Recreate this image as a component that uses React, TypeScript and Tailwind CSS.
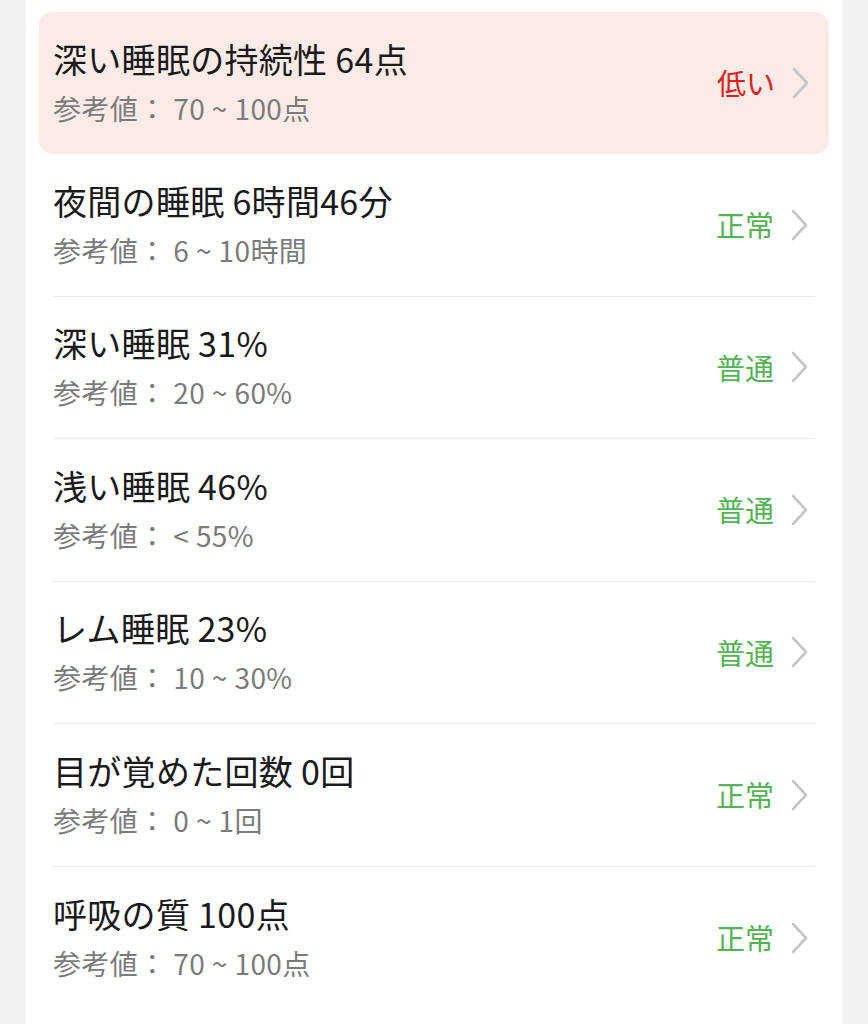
type Item = {
  title: string;
  reference: string;
  status: string;
  tone: 'low' | 'ok';
};

const items: Item[] = [
  { title: '深い睡眠の持続性 64点', reference: '参考値： 70 ~ 100点', status: '低い', tone: 'low' },
  { title: '夜間の睡眠 6時間46分', reference: '参考値： 6 ~ 10時間', status: '正常', tone: 'ok' },
  { title: '深い睡眠 31%', reference: '参考値： 20 ~ 60%', status: '普通', tone: 'ok' },
  { title: '浅い睡眠 46%', reference: '参考値： < 55%', status: '普通', tone: 'ok' },
  { title: 'レム睡眠 23%', reference: '参考値： 10 ~ 30%', status: '普通', tone: 'ok' },
  { title: '目が覚めた回数 0回', reference: '参考値： 0 ~ 1回', status: '正常', tone: 'ok' },
  { title: '呼吸の質 100点', reference: '参考値： 70 ~ 100点', status: '正常', tone: 'ok' },
];

function Chevron() {
  return (
    <svg width="17" height="32" viewBox="0 0 17 32" className="ml-[17px] shrink-0" fill="none">
      <path d="M2 2 L15 16 L2 30" stroke="#c6c6c6" strokeWidth="2.6" strokeLinecap="round" strokeLinejoin="round" />
    </svg>
  );
}

function Row({ item, highlighted, last }: { item: Item; highlighted: boolean; last: boolean }) {
  let cls = 'mx-[27px] flex h-[142.5px] items-center pr-[7px]';
  if (highlighted) cls = 'mx-[13px] flex h-[142px] items-center rounded-[14px] bg-[#fbebe7] pl-[14px] pr-[20px]';
  else if (!last) cls += ' border-b border-[#ebebeb]';

  return (
    <div className={cls}>
      <div className="flex-1 pt-[6px]">
        <div className="text-[34px] leading-[44px] tracking-[0.3px] text-[#1a1a1a]">{item.title}</div>
        <div className="text-[28px] leading-[54px] tracking-[0.4px] text-[#7b7b7b] whitespace-pre">{item.reference}</div>
      </div>
      <span
        className={
          item.tone === 'low'
            ? 'text-[29px] text-[#e31b1b]'
            : 'text-[29px] text-[#55b356]'
        }
      >
        {item.status}
      </span>
      <Chevron />
    </div>
  );
}

export default function App() {
  return (
    <div
      className="min-h-[1024px] bg-[#f1f2f4] px-[26px]"
      style={{ fontFamily: '"Noto Sans CJK JP", "Noto Sans", sans-serif' }}
    >
      <div className="min-h-[1024px] bg-white pt-[12px]">
        {items.map((item, i) => (
          <Row key={item.title} item={item} highlighted={i === 0} last={i === items.length - 1} />
        ))}
      </div>
    </div>
  );
}
